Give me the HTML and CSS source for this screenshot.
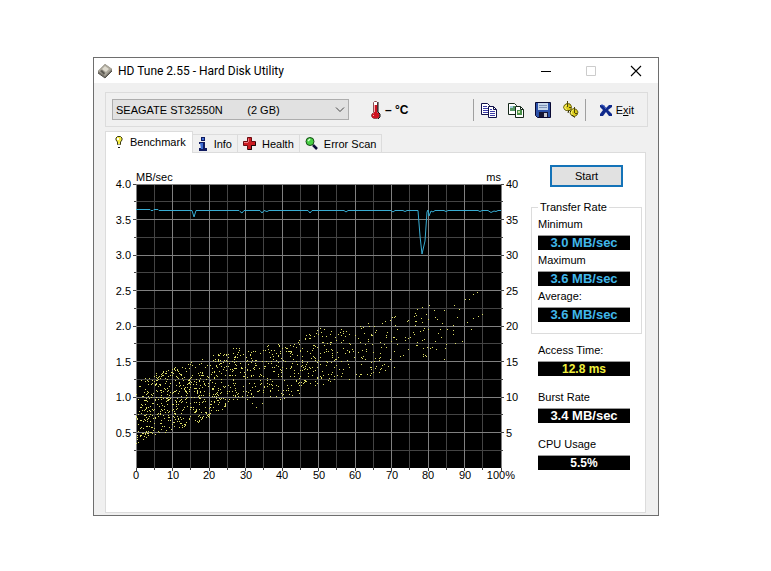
FILE: index.html
```html
<!DOCTYPE html>
<html lang="en">
<head>
<meta charset="utf-8">
<title>HD Tune 2.55 - Hard Disk Utility</title>
<link rel="stylesheet" href="styles.css">
</head>
<body>
<main class="window">
  <header class="titlebar">
    <svg class="app-icon" width="16" height="16" viewBox="0 0 16 16" aria-hidden="true">
      <path d="M1 8 8 1 15 6 15 8 8 15 1 10z" fill="#77736a"/>
      <path d="M1 8 8 1 15 6 8 13z" fill="#aaa69a"/>
      <path d="M5 6 8 3 12 6 9 9z" fill="#dedace"/>
      <path d="M3 8 5 7 8 10 7 12z" fill="#5c5952"/>
      <path d="M1 10 8 15 15 8" fill="none" stroke="#55524c"/>
    </svg>
    <h1 class="title">HD Tune 2.55 - Hard Disk Utility</h1>
    <div class="caption-buttons">
      <button class="caption" type="button" aria-label="Minimize"><svg width="12" height="12" viewBox="0 0 12 12"><path d="M1 6.500h10" stroke="#000"/></svg></button>
      <button class="caption" type="button" aria-label="Maximize" disabled><svg width="12" height="12" viewBox="0 0 12 12"><path d="M1.500 1.500h9v9h-9z" fill="none" stroke="#ccc"/></svg></button>
      <button class="caption" type="button" aria-label="Close"><svg width="12" height="12" viewBox="0 0 12 12"><path d="M1 1l10 10M11 1 1 11" stroke="#000" stroke-width="1.100"/></svg></button>
    </div>
  </header>

  <div class="client">
    <div class="toolbar">
      <div class="drive">
        <select class="drive-select" aria-label="Drive">
          <option>SEAGATE ST32550N&nbsp;&nbsp;&nbsp;&nbsp;&nbsp;&nbsp;&nbsp;&nbsp;(2 GB)</option>
        </select>
        <svg class="drive-arrow" width="10" height="6" viewBox="0 0 10 6" aria-hidden="true"><path d="M1 .5 5 4.500 9 .5" fill="none" stroke="#444"/></svg>
      </div>
      <div class="temperature">
        <svg width="12" height="20" viewBox="0 0 12 20" aria-hidden="true">
          <path d="M4.500 2.500 5.500 1.500h2l1 1v10l2 2v2l-2 2h-4l-2-2v-2l2-2z" fill="#fff" stroke="#8a4a50"/>
          <path d="M5 5h3v8h2v4l-1 1H4l-1-1v-3l2-1z" fill="#cf1220"/>
          <path d="M9 2v10l2 2v3l-2 2" fill="none" stroke="#111"/>
          <path d="M4 15h1v1H4zM5 5h1v7H5z" fill="#f7a8ac"/>
        </svg>
        <span>–&nbsp;°C</span>
      </div>
      <div class="tools">
        <button class="tool" type="button" aria-label="Copy text"><svg width="16" height="16" viewBox="0 0 16 16">
          <path d="M.5 1.500h6l2 2v9h-8z" fill="#fff" stroke="#10104a"/><path d="M2 4.500h4M2 6.500h5M2 8.500h5M2 10.500h5" stroke="#3d3da8"/>
          <path d="M7.500 4.500h5l3 3v8h-8z" fill="#fff" stroke="#10104a"/><path d="M12.500 4.500v3h3" fill="none" stroke="#10104a"/><path d="M9 7.500h2M9 9.500h5M9 11.500h5M9 13.500h5" stroke="#3d3da8"/></svg></button>
        <button class="tool" type="button" aria-label="Copy screenshot"><svg width="16" height="16" viewBox="0 0 16 16">
          <path d="M.5 1.500h6l2 2v9h-8z" fill="#fff" stroke="#152819"/><path d="M2 4h5v5H2z" fill="#559663"/><path d="M2 4h3v2H2z" fill="#a3cbe0"/>
          <path d="M7.500 4.500h5l3 3v8h-8z" fill="#fff" stroke="#152819"/><path d="M12.500 4.500v3h3" fill="none" stroke="#152819"/><path d="M9 8h5v5H9z" fill="#489048"/><path d="M10 9h2v2h-2z" fill="#c9e3a1"/></svg></button>
        <button class="tool" type="button" aria-label="Save"><svg width="16" height="16" viewBox="0 0 16 16">
          <path d="M.5.5h15v15h-13l-2-2z" fill="#2b50a8" stroke="#080832"/><path d="M3 1h10v7H3z" fill="#c6d6ea"/><path d="M4 3.500h8M4 5.500h8" stroke="#8094b8"/><path d="M4 10h9v5H4z" fill="#151534"/><path d="M9 11h3v4H9z" fill="#c8c8cf"/></svg></button>
        <button class="tool" type="button" aria-label="Options"><svg width="18" height="17" viewBox="0 0 18 17">
          <g fill="#d9c91a" stroke="#6a6210"><path d="M2.500 4 5 2.500 8 3 9.500 5.500 9 8.500 6.500 10 3 9 1.500 6.500z"/><path d="M9 9 11.500 7.500 14.500 8.500 16 11 15 14 12.500 15.500 9.500 14.500 8 12z"/></g>
          <path d="M3 5.500 5 4M3 5.500v2l2 1M9.500 10.500l2-1.500M9.500 10.500v2l2 1.500" fill="none" stroke="#fff87a"/>
          <path d="M5.500 0v6M7 6.500h2M12.500 6v6M13 12.500h2" stroke="#4d4609"/><path d="M8 10l1 1M7 9l-1 3M10 14l3 2.500" stroke="#2e2a06"/></svg></button>
      </div>
      <button class="exit" type="button"><svg width="12" height="12" viewBox="0 0 12 12" aria-hidden="true"><path d="M0 1h4l2 3 3-3h3v2L8 6l4 4v2H9L6 8l-3 4H0v-2l3-4L0 3z" fill="#102a8c"/><path d="M1 1h2l3 4" fill="none" stroke="#4767cb"/></svg><span>E<u>x</u>it</span></button>
    </div>

    <nav class="tabs" role="tablist">
      <button class="tab selected" type="button" role="tab" aria-selected="true"><svg width="10" height="14" viewBox="0 0 10 14" aria-hidden="true"><path d="M3.500 1.500h3L8 3v2L6.500 7v2.500h-3V7L2 5V3z" fill="#f6ef46" stroke="#3d3b12"/><path d="M3 3h2v2H3z" fill="#fff"/><path d="M4 9h2v1H4z" fill="#999"/><path d="M4 12h2v1H4z" fill="#111"/></svg>Benchmark</button>
      <button class="tab" type="button" role="tab"><svg width="10" height="14" viewBox="0 0 10 14" aria-hidden="true"><path d="M3 0h4v4H3zM1 5h6v6h2v3H1v-3h2V7H1z" fill="#101b60"/><path d="M4 1h2v2H4zM2 6h3v6H3" fill="#3d6cd4"/></svg>Info</button>
      <button class="tab" type="button" role="tab"><svg width="13" height="13" viewBox="0 0 13 13" aria-hidden="true"><path d="M4.500.5h4v4h4v4h-4v4h-4v-4h-4v-4h4z" fill="#cc1c22" stroke="#6b0b10"/><path d="M5.500 5V1.500M1 5.500h4" stroke="#f28084"/><path d="M12.500 5v3.500h-4v4H5" fill="none" stroke="#22080a"/></svg>Health</button>
      <button class="tab" type="button" role="tab"><svg width="13" height="13" viewBox="0 0 13 13" aria-hidden="true"><path d="M8 8l4 4" stroke="#0b0b38" stroke-width="2.500"/><circle cx="5" cy="4.500" r="4" fill="#48cf45" stroke="#174c17"/><path d="M3 4 5 2" stroke="#d3ffd0" stroke-width="1.500"/></svg>Error Scan</button>
    </nav>

    <section class="panel">
      <svg class="chart" viewBox="-30 -20 419 310" role="img" aria-label="Transfer rate and access time">
        <rect width="365" height="284"/>
        <g id="grid"></g>
        <path id="points" class="points"/>
        <path class="rate" d="M0 25.500H14L15 26.500H17L18 25.500H22L23 26.500H29L30 26.500H56L58 33 60 26.500H103L104 27.500 106 29 108 26.500H124L126 29 128 26.500 131 27.500 133 26.500H172L174 29 176 26.500H208L210 28 212 26.500H255L257 28 259 26.500H267L269 27.500 271 26.500H282L284 52 286 70 289 57 291 28 292 26 293 32 295 27 297 28 299 26.500H308L310 27.500 312 26.500H342L344 27.500 346 26.500H352L355 28.500 358 27 360 27.500 362 26.500H365"/>
        <g id="axes" class="labels"></g>
      </svg>

      <aside class="side">
        <button class="start" type="button">Start</button>
        <fieldset class="group">
          <legend>Transfer Rate</legend>
          <dl class="readings">
            <dt>Minimum</dt><dd class="speed">3.0 MB/sec</dd>
            <dt>Maximum</dt><dd class="speed">3.6 MB/sec</dd>
            <dt>Average:</dt><dd class="speed">3.6 MB/sec</dd>
          </dl>
        </fieldset>
        <dl class="readings spaced">
          <div><dt>Access Time:</dt><dd class="access">12.8 ms</dd></div>
          <div><dt>Burst Rate</dt><dd class="burst">3.4 MB/sec</dd></div>
          <div><dt>CPU Usage</dt><dd>5.5%</dd></div>
        </dl>
      </aside>
    </section>
  </div>
</main>
<script src="chart.js"></script>
</body>
</html>
```
FILE: chart.js
```js
const NS = 'http://www.w3.org/2000/svg';
const W = 365, H = 284;

function add(parent, tag, attrs, text) {
  const el = document.createElementNS(NS, tag);
  for (const key in attrs) el.setAttribute(key, attrs[key]);
  if (text !== undefined) el.textContent = text;
  parent.appendChild(el);
}

const grid = document.getElementById('grid');
const axes = document.getElementById('axes');

// Minor lines go first so the brighter major lines cross over them.
for (const major of [false, true]) {
  const cls = major ? 'major' : 'minor';
  for (let i = major ? 0 : 1; i <= 20; i += 2) {
    const x = Math.floor(i * W / 20) + 0.5;
    add(grid, 'path', { class: cls, d: `M${x} 0V${H}` });
    add(axes, 'path', { class: 'tick', d: `M${x} ${H}v${major ? 3 : 2}` });
  }
  for (let i = major ? 0 : 1; i <= 16; i += 2) {
    const y = Math.floor(i * H / 16) + 0.5;
    if (i < 16) add(grid, 'path', { class: cls, d: `M0 ${y}H${W}` });
    const t = major ? 3 : 2;
    if (i < 16) add(axes, 'path', { class: 'tick', d: `M${-t} ${y}h${t}M${W} ${y}h${t}` });
  }
}

for (let i = 0; i < 8; i++) {
  const y = Math.round(i * H / 8) + 4;
  add(axes, 'text', { x: -5, y, 'text-anchor': 'end' }, (4 - i / 2).toFixed(1));
  add(axes, 'text', { x: 370, y }, String(40 - i * 5));
}
for (let i = 0; i < 10; i++) {
  add(axes, 'text', { x: Math.round(i * W / 10), y: 295, 'text-anchor': 'middle' }, String(i * 10));
}
add(axes, 'text', { x: 379, y: 295, 'text-anchor': 'end' }, '100%');
add(axes, 'text', { x: 0, y: -3 }, 'MB/sec');
add(axes, 'text', { x: 365, y: -3, 'text-anchor': 'end' }, 'ms');

// Access-time samples: a band between two outlines, thinning to the right.
const upper = [[0, 198], [20, 190], [36, 184], [73, 172], [98, 164], [150, 160], [182, 144], [225, 142], [264, 128], [295, 128]];
const lower = [[0, 266], [9, 254], [36, 247], [73, 235], [92, 222], [108, 216], [145, 216], [184, 206], [220, 196], [250, 188], [270, 180], [295, 170]];
function at(line, x) {
  for (let i = 1; i < line.length; i++) {
    const [x0, y0] = line[i - 1], [x1, y1] = line[i];
    if (x <= x1) return y0 + (y1 - y0) * (x - x0) / (x1 - x0);
  }
  return line[line.length - 1][1];
}
let seed = 2550;
function rnd() {
  seed = (seed * 1664525 + 1013904223) % 4294967296;
  return seed / 4294967296;
}
const samples = [
  [281, 125], [286, 123], [293, 121], [298, 126], [308, 126], [318, 121], [323, 125], [321, 133],
  [333, 115], [329, 115], [337, 110], [341, 108], [346, 130], [342, 132], [337, 134], [331, 138],
  [335, 145], [299, 133], [301, 135], [306, 139], [317, 141], [317, 146], [311, 145], [302, 149],
  [305, 153], [317, 150], [326, 157], [319, 159], [310, 160], [309, 164], [308, 175], [296, 163],
  [294, 164], [300, 165], [290, 172], [299, 157], [304, 145], [120, 223], [116, 219], [126, 219]
];
for (const [from, to, count] of [[0, 50, 340], [50, 100, 290], [100, 145, 145], [145, 200, 185], [200, 245, 90], [245, 293, 65]]) {
  for (let n = 0; n < count; n++) {
    const x = from + rnd() * (to - from);
    const top = at(upper, x);
    samples.push([Math.floor(x), Math.floor(top + rnd() * (at(lower, x) - top))]);
  }
}
document.getElementById('points').setAttribute('d', samples.map(([x, y]) => `M${x} ${y}h1v1h-1z`).join(''));
```
FILE: styles.css
```css
* {
  box-sizing: border-box;
}

body {
  margin: 0;
  padding: 57px 112px 0 93px;
  background: #fff;
  color: #000;
  font: 11px/14px "Liberation Sans", Arial, sans-serif;
}

button,
select {
  padding: 0;
  border: 0;
  background: none;
  color: inherit;
  font: inherit;
}

svg {
  display: block;
  flex: none;
}

.window {
  border: 1px solid #6e6e6e;
  background: #f0f0f0;
}

.titlebar {
  display: flex;
  align-items: center;
  height: 25px;
  padding-left: 3px;
  background: #fff;
}

.title {
  flex: 1;
  margin: 0 0 0 5px;
  font: 12px/16px Roboto, "Noto Sans", sans-serif;
}

.caption-buttons {
  display: flex;
}

.caption {
  display: flex;
  align-items: center;
  justify-content: center;
  width: 45px;
  height: 25px;
}

.client {
  padding: 9px 10px 2px 11px;
}

.toolbar {
  display: flex;
  align-items: center;
  height: 35px;
  padding: 0 13px 0 6px;
  border: 1px solid #dcdcdc;
}

.drive {
  position: relative;
  flex: 0 1 237px;
}

.drive-select {
  display: block;
  width: 100%;
  height: 21px;
  padding: 0 20px 0 3px;
  border: 1px solid #adadad;
  border-radius: 0;
  background: #e1e1e1;
  appearance: none;
}

.drive-arrow {
  position: absolute;
  top: 8px;
  right: 4px;
  pointer-events: none;
}

.temperature {
  display: flex;
  align-items: center;
  gap: 4px;
  margin-left: 20px;
  font-size: 12px;
  font-weight: bold;
}

.tools {
  display: flex;
  align-items: center;
  gap: 11px;
  height: 22px;
  margin-left: auto;
  padding: 0 5px 0 7px;
  border: solid #a0a0a0;
  border-width: 0 1px;
}

.exit {
  display: flex;
  align-items: center;
  gap: 4px;
  margin-left: 14px;
}

.tabs {
  display: flex;
  align-items: flex-end;
  height: 25px;
}

.tab {
  display: flex;
  align-items: center;
  gap: 6px;
  height: 18px;
  padding: 0 5px;
  border: 1px solid #dcdcdc;
  border-width: 1px 1px 0 0;
}

.tab.selected {
  position: relative;
  z-index: 1;
  height: 22px;
  margin-bottom: -1px;
  padding: 0 6px 2px 8px;
  border-left-width: 1px;
  background: #fff;
}

.panel {
  display: flex;
  align-items: flex-start;
  margin-right: 2px;
  padding: 11px 0 38px;
  border: 1px solid #dcdcdc;
  background: #fff;
}

.chart {
  flex: 1;
  min-width: 0;
  overflow: visible;
}

.minor,
.major,
.tick {
  fill: none;
  stroke: #444;
}

.major {
  stroke: #808080;
}

.points {
  fill: #dede68;
  shape-rendering: crispEdges;
}

.rate {
  fill: none;
  stroke: #38acd2;
}

.side {
  flex: none;
  width: 120px;
  padding: 1px 3px 0 6px;
}

.start {
  display: block;
  width: 73px;
  height: 22px;
  margin: 0 auto 13px 19px;
  border: 2px solid #1473b8;
  background: #e1e1e1;
}

.group {
  min-width: 0;
  margin: 0;
  padding: 0 11px 11px 6px;
  border: 1px solid #dcdcdc;
}

.group legend {
  padding: 0 2px;
}

.readings {
  margin: 0;
}

.readings dt {
  line-height: 21px;
}

.readings dd {
  height: 15px;
  margin: 0;
  border-top: 1px solid #999;
  background: #000;
  color: #fff;
  font-size: 12px;
  font-weight: bold;
  text-align: center;
}

.readings .speed {
  color: #41b7ea;
  font-size: 13px;
}

.readings .burst {
  font-size: 13px;
}

.readings .access {
  color: #f0f03c;
}

.spaced {
  display: grid;
  gap: 11px;
  padding: 6px 12px 0 7px;
}
```
